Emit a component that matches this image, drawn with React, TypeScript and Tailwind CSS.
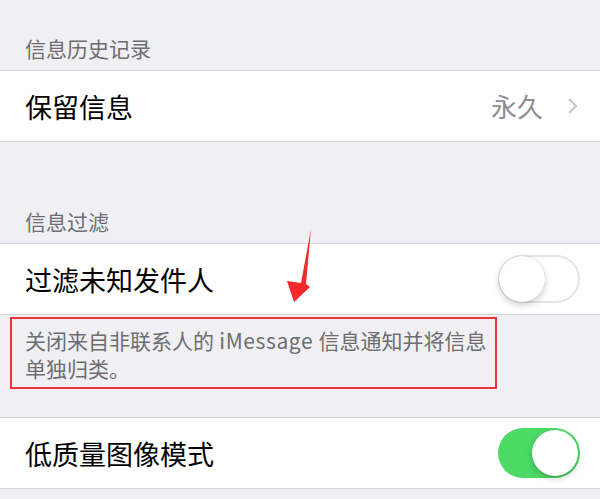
import React from "react";

const font = { fontFamily: '"Noto Sans CJK SC", "Noto Sans", sans-serif' };

function Toggle({ on }: { on: boolean }) {
  if (on) {
    return (
      <div className="flex h-[50px] w-[82px] items-center justify-end rounded-full bg-[#4cd964] p-[2px]">
        <div className="h-[46px] w-[46px] rounded-full bg-white shadow-[0_3px_6px_rgba(0,0,0,0.18),0_1px_1px_rgba(0,0,0,0.12)]" />
      </div>
    );
  }
  return (
    <div className="flex h-[48px] w-[82px] items-center justify-start rounded-full border-[2px] border-[#e5e5ea] bg-white">
      <div className="-ml-[1px] h-[46px] w-[46px] rounded-full bg-white shadow-[0_3px_7px_rgba(0,0,0,0.2),0_0_1px_rgba(0,0,0,0.2)]" />
    </div>
  );
}

function Row({ children }: { children: React.ReactNode }) {
  return (
    <div className="flex h-[72px] items-center justify-between border-y border-[#d4d4d9] bg-white pl-[25px] pr-[20px]">
      {children}
    </div>
  );
}

function Header({ text, className }: { text: string; className: string }) {
  return (
    <div className={`px-[25px] pb-[8px] text-[21px] leading-[28px] text-[#6d6d72] ${className}`}>
      {text}
    </div>
  );
}

export default function App() {
  return (
    <div className="relative h-[499px] w-[600px] overflow-hidden bg-[#efeff4]" style={font}>
      <Header text="信息历史记录" className="pt-[34px]" />
      <Row>
        <span className="text-[27px] leading-none text-black">保留信息</span>
        <div className="flex items-center gap-[24px]">
          <span className="text-[26px] leading-none text-[#8e8e93]">永久</span>
          <svg width="12" height="18" viewBox="0 0 12 18" className="mr-[1px]">
            <path d="M2 2 L9 9 L2 16" fill="none" stroke="#c7c7cc" strokeWidth="2" />
          </svg>
        </div>
      </Row>

      <Header text="信息过滤" className="pt-[65px]" />
      <Row>
        <span className="text-[27px] leading-none text-black">过滤未知发件人</span>
        <Toggle on={false} />
      </Row>

      <div className="ml-[10px] mt-[2px] h-[72px] w-[487px] border-2 border-[#e8343a] pl-[13px] pt-[7px] text-[21px] leading-[28px] text-[#6d6d72]">
        <div className="whitespace-nowrap">
          关闭来自非联系人的<span className="tracking-[0.6px]"> iMessage </span>信息通知并将信息
        </div>
        <div className="whitespace-nowrap">单独归类。</div>
      </div>

      <div className="mt-[28px]">
        <Row>
          <span className="text-[27px] leading-none text-black">低质量图像模式</span>
          <Toggle on={true} />
        </Row>
      </div>

      <svg className="pointer-events-none absolute left-0 top-0" width="600" height="499">
        <polygon points="311,229 306,284 310,287 294,302 287,281 301,283" fill="#f5292c" />
      </svg>
    </div>
  );
}
